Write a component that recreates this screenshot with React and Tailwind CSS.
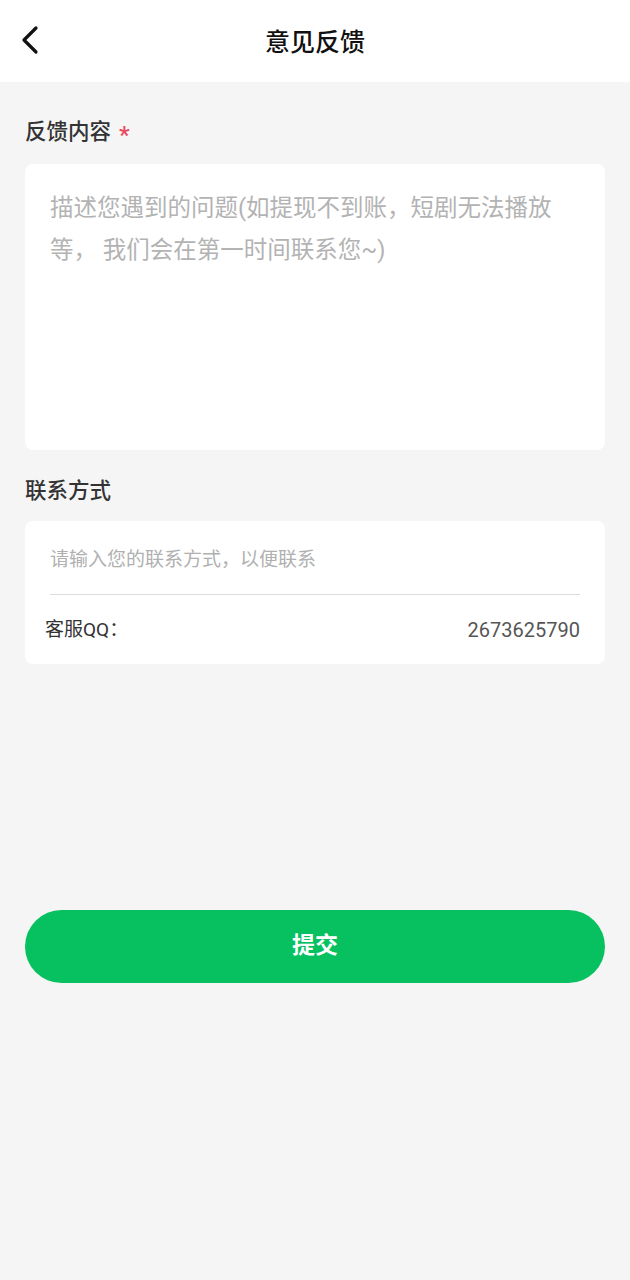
import React from 'react';

const font = { fontFamily: 'Roboto, "Noto Sans CJK SC", "Noto Sans", sans-serif' };

const App = () => {
  return (
    <div className="min-h-[1280px] w-[630px] bg-[#f5f5f5]" style={font}>
      {/* Header */}
      <div className="relative flex h-[82px] items-center justify-center bg-white">
        <button className="absolute left-[17px] top-[21px] p-1">
          <svg width="20" height="30" viewBox="0 0 20 30" fill="none">
            <path d="M15 3 L3 15 L15 27" stroke="#111" strokeWidth="3.2" strokeLinecap="round" strokeLinejoin="round" />
          </svg>
        </button>
        <h1 className="mt-[4px] text-[25px] font-medium text-[#111]">意见反馈</h1>
      </div>

      <div className="px-[25px]">
        {/* Feedback content */}
        <div className="mt-[36px] flex h-[28px] items-center text-[21.5px] font-medium text-[#333]">
          反馈内容
          <span className="ml-[8px] mt-[6px] text-[24px] leading-none text-[#e84a5f]">*</span>
        </div>
        <div className="mt-[18px] h-[286px] rounded-[8px] bg-white px-[25px] pt-[23px]">
          <p className="text-[23.5px] leading-[42px] text-[#b3b3b3]">
            描述您遇到的问题(如提现不到账，短剧无法播放等， 我们会在第一时间联系您~)
          </p>
        </div>

        {/* Contact */}
        <div className="mt-[27px] h-[28px] text-[21.5px] font-medium leading-[28px] text-[#333]">联系方式</div>
        <div className="mt-[16px] rounded-[8px] bg-white px-[25px] pb-[21px] pt-[26px]">
          <div className="border-b border-[#dcdcdc] pb-[21px] text-[19px] leading-[26px] text-[#b0b0b0]">
            请输入您的联系方式，以便联系
          </div>
          <div className="-ml-[5px] mt-[22px] flex items-center justify-between text-[19px] leading-[26px]">
            <span className="text-[#333]">客服QQ：</span>
            <span className="text-[20px] text-[#555]">2673625790</span>
          </div>
        </div>

        {/* Submit */}
        <button className="mt-[246px] flex h-[73px] w-full items-center justify-center rounded-full bg-[#07c160] text-[23px] font-bold text-white">
          提交
        </button>
      </div>
    </div>
  );
};

export default App;
